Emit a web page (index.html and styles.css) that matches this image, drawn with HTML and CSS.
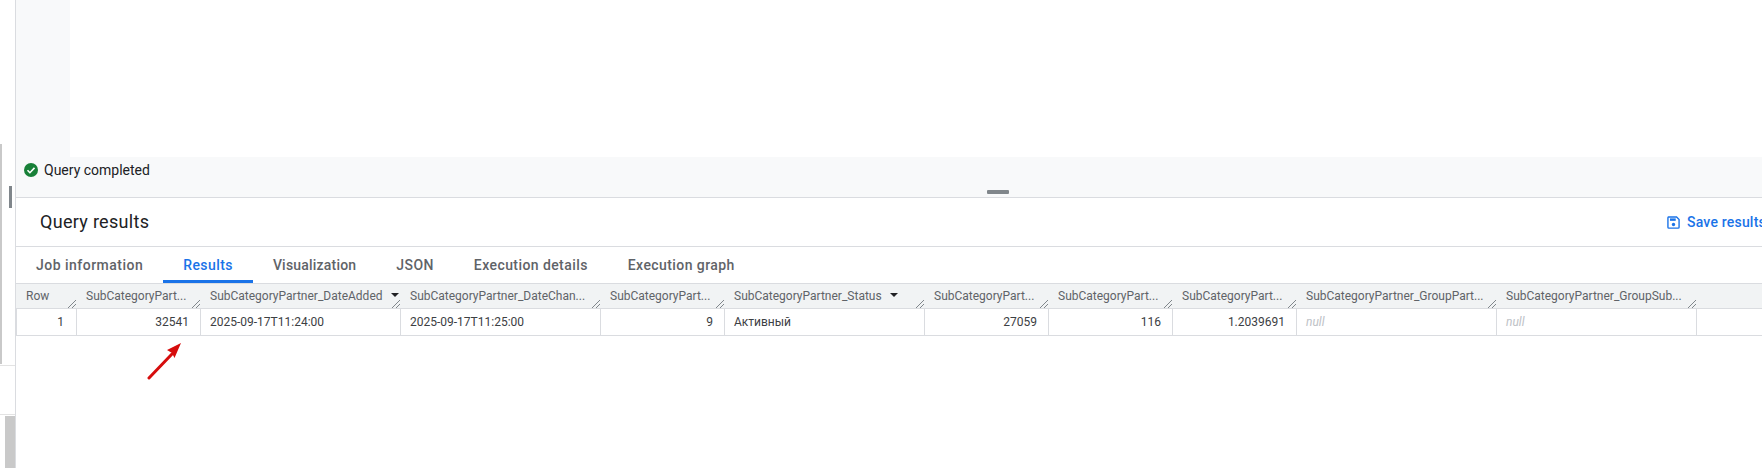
FILE: index.html
```html
<!DOCTYPE html>
<html lang="en">
<head>
<meta charset="utf-8">
<title>Query results</title>
<link rel="stylesheet" href="styles.css">
</head>
<body>
<div class="page">
  <aside class="rail">
    <div class="rail-track"></div>
    <div class="rail-gap"></div>
    <div class="rail-thumb"></div>
    <div class="rail-handle"></div>
  </aside>
  <main class="main">
    <section class="editor"><div class="gutter"></div></section>
    <section class="status">
      <svg class="check" viewBox="0 0 14 14" width="14" height="14"><circle cx="7" cy="7" r="7" fill="#188038"/><path d="M3.5 7.3l2.4 2.4 4.6-4.8" fill="none" stroke="#fff" stroke-width="1.6"/></svg>
      <span>Query completed</span>
      <div class="grip"></div>
    </section>
    <header class="title-row">
      <h1>Query results</h1>
      <div class="save">
        <svg viewBox="0 0 14 14" width="13" height="13"><path d="M1.7 1h8.6L13 3.7v8.3a1 1 0 0 1-1 1H2a1 1 0 0 1-1-1V2a1 1 0 0 1 .7-1z" fill="none" stroke="#1a73e8" stroke-width="1.5"/><rect x="3.2" y="2.6" width="6.2" height="2.6" fill="#1a73e8"/><circle cx="7" cy="9.2" r="1.8" fill="#1a73e8"/></svg>
        <span>Save results</span>
      </div>
    </header>
    <nav class="tabs">
      <div class="tab tab-job">Job information</div>
      <div class="tab tab-active">Results</div>
      <div class="tab tab-vis">Visualization</div>
      <div class="tab">JSON</div>
      <div class="tab">Execution details</div>
      <div class="tab">Execution graph</div>
    </nav>
    <div class="grid head">
      <div class="h c-row"><span>Row</span><i class="rs"></i></div>
      <div class="h c-a"><span>SubCategoryPart...</span><i class="rs"></i></div>
      <div class="h c-b"><span>SubCategoryPartner_DateAdded</span><b class="sort sort-end"></b><i class="rs"></i></div>
      <div class="h c-b"><span>SubCategoryPartner_DateChan...</span><i class="rs"></i></div>
      <div class="h c-a"><span>SubCategoryPart...</span><i class="rs"></i></div>
      <div class="h c-b"><span>SubCategoryPartner_Status</span><b class="sort sort-mid"></b><i class="rs"></i></div>
      <div class="h c-a"><span>SubCategoryPart...</span><i class="rs"></i></div>
      <div class="h c-a"><span>SubCategoryPart...</span><i class="rs"></i></div>
      <div class="h c-a"><span>SubCategoryPart...</span><i class="rs"></i></div>
      <div class="h c-b"><span>SubCategoryPartner_GroupPart...</span><i class="rs"></i></div>
      <div class="h c-b"><span>SubCategoryPartner_GroupSub...</span><i class="rs"></i></div>
    </div>
    <div class="grid row">
      <div class="d c-row num">1</div>
      <div class="d c-a num">32541</div>
      <div class="d c-b">2025-09-17T11:24:00</div>
      <div class="d c-b">2025-09-17T11:25:00</div>
      <div class="d c-a num">9</div>
      <div class="d c-b">Активный</div>
      <div class="d c-a num">27059</div>
      <div class="d c-a num">116</div>
      <div class="d c-a num">1.2039691</div>
      <div class="d c-b nul">null</div>
      <div class="d c-b nul">null</div>
    </div>
    <svg class="arrow" viewBox="0 0 40 43" width="40" height="43"><path d="M2 40L25 16" stroke="#d60d0d" stroke-width="3" stroke-linecap="round" fill="none"/><path d="M34 5L20 12 25 15 27.5 20z" fill="#d60d0d"/></svg>
  </main>
</div>
</body>
</html>
```
FILE: styles.css
```css
* { box-sizing: border-box; }
html, body { margin: 0; height: 100%; overflow: hidden; background: #fff; }
body { font-family: Roboto, "Noto Sans", sans-serif; color: #202124; }
.page { display: flex; width: 1762px; height: 468px; overflow: hidden; }
.rail { position: relative; width: 16px; flex: none; border-right: 1px solid #dadce0; }
.rail-track { position: absolute; left: 0; top: 144px; width: 2px; height: 220px; background: #c9c9c9; }
.rail-gap { position: absolute; left: 0; top: 365px; width: 15px; height: 1px; background: #e3e3e3; }
.rail-thumb { position: absolute; left: 9px; top: 186px; width: 3px; height: 22px; background: #80868b; }
.rail-handle { position: absolute; left: 0; top: 414px; width: 15px; height: 54px; border-top: 1px solid #e3e3e3; }
.rail-handle::after { content: ""; display: block; width: 10px; height: 52px; margin: 1px 0 0 5px; background: #c9c9c9; }
.main { position: relative; flex: 1; min-width: 0; }
.editor { height: 157px; }
.gutter { width: 54px; height: 100%; background: #f8f9fa; }
.status { position: relative; display: flex; align-items: center; gap: 6px; height: 41px; padding: 0 0 14px 8px; background: #f8f9fa; border-bottom: 1px solid #dadce0; font-size: 14px; }
.check { flex: none; }
.grip { position: absolute; left: 971px; top: 33px; width: 22px; height: 4px; border-radius: 1px; background: #80868b; }
.title-row { display: flex; align-items: center; justify-content: space-between; height: 49px; padding-left: 24px; border-bottom: 1px solid #dadce0; }
h1 { margin: 0 0 2px; font-size: 18px; font-weight: 400; letter-spacing: .3px; }
.save { display: flex; align-items: center; gap: 7px; width: 95px; flex: none; font-size: 14px; font-weight: 500; letter-spacing: .2px; color: #1a73e8; white-space: nowrap; }
.save svg { flex: none; }
.tabs { display: flex; height: 36px; font-size: 14px; font-weight: 500; letter-spacing: .42px; color: #5f6368; }
.tab { height: 36px; padding: 10px 20px 0; line-height: 16px; white-space: nowrap; }
.tab-job { letter-spacing: .48px; }
.tab-vis { letter-spacing: .2px; }
.tab-active { color: #1a73e8; border-bottom: 3px solid #1a73e8; }
.grid { display: flex; }
.head { height: 26px; background: #f1f3f4; border-top: 1px solid #dadce0; border-bottom: 1px solid #dadce0; font-size: 12px; color: #5f6368; }
.row { height: 27px; border-bottom: 1px solid #dadce0; font-size: 12px; color: #3c4043; }
.c-row { width: 61px; flex: none; }
.c-a { width: 124px; flex: none; }
.c-b { width: 200px; flex: none; }
.h { position: relative; display: flex; align-items: center; padding: 0 11px 0 9px; white-space: nowrap; }
.h.c-row { padding-left: 10px; }
.sort { position: absolute; top: 9px; width: 0; height: 0; border-left: 4px solid transparent; border-right: 4px solid transparent; border-top: 4px solid #202124; }
.sort-end { right: 2px; }
.sort-mid { right: 27px; }
.rs { position: absolute; right: 1px; bottom: 0; width: 8px; height: 8px; background: linear-gradient(135deg, transparent 0 44%, #80868b 44% 56%, transparent 56% 70%, #80868b 70% 80%, transparent 80%); }
.d { display: flex; align-items: center; padding: 0 11px 0 9px; border-right: 1px solid #dadce0; white-space: nowrap; }
.row .c-row { border-left: 1px solid #dadce0; padding-right: 12px; }
.num { justify-content: flex-end; }
.nul { font-style: italic; color: #bdc1c6; }
.arrow { position: absolute; left: 131px; top: 338px; }
```
